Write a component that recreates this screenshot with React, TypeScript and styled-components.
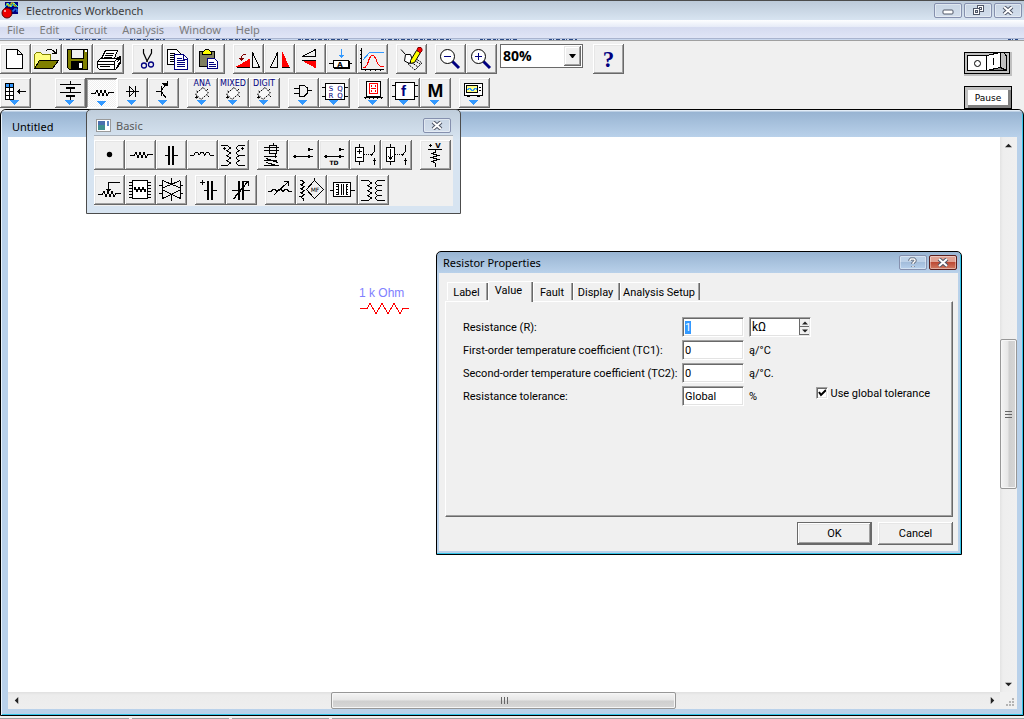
import React from 'react';
import styled, { createGlobalStyle, css } from 'styled-components';

const uiFont = '"Noto Sans", "Open Sans", sans-serif';
const dialogFont = 'Roboto, "Liberation Sans", Arial, sans-serif';
const navy = '#000080';
const face = '#f0f0f0';

const GlobalStyle = createGlobalStyle`
  * { box-sizing: border-box; }
  body { margin: 0; background: ${face}; font-family: ${uiFont}; font-size: 11px; color: #000; }
  button, input, select { font: inherit; color: inherit; margin: 0; padding: 0; border-radius: 0; }
`;

/* ---------- frame ---------- */

const Shell = styled.div`
  display: flex;
  flex-direction: column;
  height: 100vh;
  overflow: hidden;
  background: ${face};
`;

const TitleBar = styled.header`
  display: flex;
  align-items: center;
  height: 20px;
  padding: 0 2px 0 0;
  gap: 7px;
  border-top: 1px solid #4c4c4c;
  background: linear-gradient(#bccad9, #d8e4f1);
`;

const TitleText = styled.h1`
  flex: 1;
  margin: 0;
  font-size: 11px;
  line-height: 18px;
  font-weight: 400;
  color: #3c3c3c;
`;

const WindowButtons = styled.div`
  display: flex;
  gap: 2px;
`;

const CaptionButton = styled.button<{ $tone?: 'plain' | 'blue' | 'red' }>`
  display: flex;
  align-items: center;
  justify-content: center;
  width: 28px;
  height: 15px;
  border: 1px solid ${(p) => (p.$tone === 'red' ? '#5b1e1c' : '#8590ae')};
  border-radius: 2px;
  box-shadow: inset 0 0 0 1px rgba(255, 255, 255, 0.4);
  background: ${(p) =>
    p.$tone === 'red'
      ? 'linear-gradient(#e0a193 0 45%, #bd4a35 50%, #d07a62)'
      : p.$tone === 'blue'
        ? 'linear-gradient(#bdd1e8 0 45%, #a3bddb 50%, #b7d0ec)'
        : 'linear-gradient(#c8d5e4, #d3deec)'};
`;

const MenuBar = styled.nav`
  display: flex;
  align-items: center;
  gap: 1px;
  height: 18px;
  padding-top: 2px;
  background: linear-gradient(#fdfeff 0, #e6ebf7 38%, #d5dbf0 42%, #e0e5f6);
`;

const MenuLink = styled.a`
  padding: 0 7px;
  line-height: 16px;
  color: #7c7c7c;
  text-decoration: none;
`;

const BandEdge = styled.svg`
  display: block;
  flex: none;
  width: 100%;
  height: 3px;
`;

/* ---------- tool bars ---------- */

const ToolArea = styled.div`
  display: flex;
  justify-content: space-between;
  height: 68px;
  padding: 3px 12px 0 0;
`;

const ToolRows = styled.div`
  display: flex;
  flex-direction: column;
  gap: 4px;
`;

const ToolRow = styled.div`
  display: flex;
  gap: 8px;
`;

const ToolGroup = styled.div<{ $before?: number }>`
  display: flex;
  margin-left: ${(p) => p.$before ?? 0}px;
`;

const Tool = styled.button<{ $pressed?: boolean }>`
  width: 31px;
  height: 30px;
  border: 0;
  background: ${face};
  box-shadow: inset -1px -1px #696969, inset 1px 1px #fff, inset -2px -2px #a0a0a0, inset 2px 2px #e6e6e6;
  ${(p) =>
    p.$pressed &&
    css`
      background: repeating-conic-gradient(#fff 0 25%, #f0f0f0 0 50%) 0 0 / 2px 2px;
      box-shadow: inset 1px 1px #696969, inset -1px -1px #fff, inset 2px 2px #a0a0a0;
    `}
  svg { display: block; }
`;

const ZoomBox = styled.label`
  position: relative;
  display: block;
  width: 83px;
  height: 24px;
  margin-left: -5px;
  border: 1px solid #696969;
  background: #fff;
`;

const ZoomSelect = styled.select`
  width: 100%;
  height: 100%;
  padding: 0 0 2px 2px;
  border: 0;
  appearance: none;
  background: transparent;
  font: bold 14px "Open Sans", sans-serif;
`;

const DropArrow = styled.span`
  position: absolute;
  top: 1px;
  right: 1px;
  width: 17px;
  height: 20px;
  display: flex;
  align-items: center;
  justify-content: center;
  pointer-events: none;
  background: ${face};
  box-shadow: inset -1px -1px #696969, inset 1px 1px #e6e6e6, inset -2px -2px #a0a0a0, inset 2px 2px #fff;
`;

const Power = styled.div`
  display: flex;
  flex-direction: column;
  gap: 10px;
  padding-top: 8px;
`;

const PowerSwitch = styled.button`
  width: 48px;
  height: 24px;
  border: 0;
  background: #c0c0c0;
  svg { display: block; }
`;

const PauseButton = styled.button`
  width: 48px;
  height: 23px;
  border: 1px solid #000;
  background: #fff;
  box-shadow: inset 3px 3px #c0c0c0, inset -3px -3px #808080;
  font-size: 9px;
  font-family: "DejaVu Sans", sans-serif;
  line-height: 20px;
`;

/* ---------- circuit window ---------- */

const Desktop = styled.main`
  position: relative;
  display: flex;
  flex: 1;
  min-height: 0;
`;

const CircuitFrame = styled.section`
  display: flex;
  flex-direction: column;
  flex: 1;
  border: 1px solid #000;
  border-radius: 6px 6px 0 0;
  box-shadow: inset 1px 0 #e9f3fb, inset -1px -1px #33c4e8;
  background: #b9d1ea;
  padding: 0 6px 6px 7px;
  overflow: hidden;
`;

const CircuitTitle = styled.h2`
  margin: 0 -5px 0 -6px;
  padding: 5px 10px 0;
  height: 27px;
  font-size: 11px;
  line-height: 24px;
  font-weight: 400;
  background: linear-gradient(#e3edf7 0 1px, #98b4d2 2px, #b9d1ea);
`;

const Client = styled.div`
  display: grid;
  flex: 1;
  min-height: 0;
  grid-template-columns: 1fr 17px;
  grid-template-rows: 1fr 17px;
`;

const Sheet = styled.div`
  position: relative;
  background: #fff;
`;

const Part = styled.figure`
  position: absolute;
  left: 351px;
  top: 147px;
  margin: 0;
  font: 12px "Liberation Sans", Arial, sans-serif;
  line-height: 18px;
  color: #8080ff;
  svg { display: block; }
`;

const Bar = styled.div<{ $vertical?: boolean }>`
  display: flex;
  flex-direction: ${(p) => (p.$vertical ? 'column' : 'row')};
  background: ${(p) =>
    p.$vertical ? 'linear-gradient(90deg, #e3e3e3, #eee 3px, #f0f0f0)' : 'linear-gradient(#e0e0e0, #ececec 3px, #eee)'};
`;

const BarArrow = styled.button`
  display: flex;
  align-items: center;
  justify-content: center;
  width: 16px;
  height: 16px;
  border: 0;
  background: transparent;
`;

const Track = styled.div<{ $grow: number }>`
  flex: ${(p) => p.$grow} 1 0;
`;

const Thumb = styled.button<{ $grow: number; $vertical?: boolean }>`
  display: flex;
  align-items: center;
  justify-content: center;
  flex: ${(p) => p.$grow} 1 0;
  border: 1px solid #979797;
  border-radius: 2px;
  box-shadow: inset 0 0 0 1px #f6f6f6;
  background: linear-gradient(${(p) => (p.$vertical ? '90deg' : '180deg')}, #f4f4f4, #e6e6e6 48%, #cfcfcf 52%, #d6d6d6);
`;

const Corner = styled.div`
  display: flex;
  align-items: flex-end;
  justify-content: flex-end;
  padding: 2px;
  background: ${face};
`;

const StatusBar = styled.footer`
  display: flex;
  gap: 3px;
  height: 3px;
  padding-top: 2px;
`;

const StatusCell = styled.span<{ $wide?: boolean; $fill?: boolean }>`
  flex: ${(p) => (p.$fill ? '1' : 'none')};
  width: ${(p) => (p.$wide ? 129 : 97)}px;
  background: #a0a0a0;
`;

/* ---------- parts palette ---------- */

const Palette = styled.section`
  position: absolute;
  left: 86px;
  top: 0;
  width: 375px;
  padding: 0 7px 7px;
  border: 1px solid #4c4c4c;
  border-radius: 5px 5px 0 0;
  background: linear-gradient(#bfcddb, #d7e4f1 30px);
`;

const PaletteTitle = styled.header`
  display: flex;
  align-items: center;
  gap: 5px;
  height: 26px;
  padding: 6px 2px 0;
  border-bottom: 1px solid #a9b1ba;
  h2 { flex: 1; margin: 0; font-size: 11px; font-weight: 400; line-height: 20px; color: #5a5a5a; }
`;

const PaletteBody = styled.div`
  display: flex;
  flex-direction: column;
  gap: 5px;
  padding: 4px 0 1px;
  background: ${face};
`;

/* ---------- properties dialog ---------- */

const Dialog = styled.section`
  position: absolute;
  left: 436px;
  top: 142px;
  width: 526px;
  padding: 0 3px 3px 2px;
  border: 1px solid #000;
  border-radius: 5px 5px 0 0;
  background: linear-gradient(#98b4d2, #b9d1ea 21px);
  box-shadow: inset -1px -1px #33c4e8;
`;

const DialogTitle = styled.header`
  display: flex;
  align-items: center;
  gap: 2px;
  height: 21px;
  padding: 0 1px 0 4px;
  h2 { flex: 1; margin: 0; font-size: 11px; font-weight: 400; line-height: 20px; }
`;

const DialogBody = styled.form`
  padding: 7px 5px 6px 6px;
  background: ${face};
  font: 11px ${dialogFont};
`;

const Tabs = styled.div`
  display: flex;
  align-items: flex-end;
  height: 21px;
  padding-left: 2px;
`;

const Tab = styled.button<{ $active?: boolean; $width: number }>`
  position: relative;
  width: ${(p) => p.$width}px;
  height: ${(p) => (p.$active ? 21 : 18)}px;
  margin-bottom: ${(p) => (p.$active ? -1 : 1)}px;
  padding: ${(p) => (p.$active ? '0 4px 3px 0' : '2px 2px 0 0')};
  border: 0;
  background: ${face};
  text-align: center;
  white-space: nowrap;
  box-shadow: inset 1px 1px #fff, inset -1px 0 #696969, inset -2px 0 #a0a0a0;
`;

const Panel = styled.div`
  display: flex;
  justify-content: space-between;
  height: 216px;
  padding: 15px 22px 0 17px;
  border: 1px solid;
  border-color: #fff #696969 #696969 #fff;
  box-shadow: inset -1px -1px #a0a0a0;
`;

const Fields = styled.div`
  display: grid;
  grid-template-columns: 219px 62px 68px;
  grid-auto-rows: 20px;
  row-gap: 3px;
  height: max-content;
  align-items: center;
`;

const sunken = css`
  border: 1px solid;
  border-color: #a0a0a0 #fff #fff #a0a0a0;
  box-shadow: inset 1px 1px #696969, inset -1px -1px #e3e3e3;
  background: #fff;
`;

const Field = styled.input`
  width: 62px;
  height: 20px;
  padding: 0 2px;
  ${sunken}
  &:focus { outline: none; }
  &::selection { background: #39f; color: #fff; }
`;

const UnitBox = styled.div`
  display: flex;
  width: 62px;
  height: 20px;
  margin-left: 5px;
  padding: 1px;
  ${sunken}
`;

const UnitInput = styled.input`
  flex: 1;
  min-width: 0;
  padding: 0 1px;
  border: 0;
  background: transparent;
  font-size: 12px;
`;

const Spinner = styled.div`
  display: flex;
  flex-direction: column;
  width: 10px;
`;

const SpinButton = styled.button`
  display: flex;
  align-items: center;
  justify-content: center;
  flex: 1;
  min-height: 0;
  border: 1px solid #696969;
  border-width: 0 0 1px 1px;
  background: ${face};
`;

const Unit = styled.span`
  padding-left: 5px;
`;

const Check = styled.label`
  display: flex;
  align-items: center;
  gap: 3px;
  height: 14px;
  margin-top: 69px;
  white-space: nowrap;
  input {
    appearance: none;
    width: 12px;
    height: 12px;
    ${sunken}
  }
  input:checked {
    background: #fff
      url("data:image/svg+xml,%3Csvg xmlns='http://www.w3.org/2000/svg' viewBox='0 0 10 10'%3E%3Cpath d='M2 4L4 7L9 2' fill='none' stroke='black' stroke-width='2'/%3E%3C/svg%3E");
  }
`;

const Actions = styled.div`
  display: flex;
  justify-content: flex-end;
  gap: 6px;
  padding-top: 5px;
`;

const Push = styled.button<{ $default?: boolean }>`
  width: 75px;
  height: 23px;
  border: ${(p) => (p.$default ? '1px solid #696969' : '0')};
  background: ${face};
  box-shadow: inset -1px -1px #696969, inset 1px 1px #fff, inset -2px -2px #a0a0a0, inset 2px 2px #e6e6e6;
`;

/* ---------- icon drawings ---------- */

const Blue = <path d="M10 22h9v1h-1v1h-1v1h-1v1h-1v1h-1v-1h-1v-1h-1v-1h-1v-1h-1z" fill="#39f" stroke="none" />;
const T = (p: { x: number; y: number; s?: number; children: string; fill?: string; bold?: boolean; w?: string }) => (
  <text
    x={p.x}
    y={p.y}
    fontSize={p.s ?? 8}
    fill={p.fill ?? navy}
    stroke="none"
    textAnchor="middle"
    fontWeight={p.bold ? 700 : 400}
    fontFamily={p.w ?? 'DejaVu Sans, sans-serif'}
  >
    {p.children}
  </text>
);

const chip = (
  <g shapeRendering="auto">
    <path d="M16 9.5L21.5 15L14 21.5L8.5 16Z" fill="#f8f8f8" strokeDasharray="2 1" />
    <path d="M9.5 17.5V20.5M8 19.5H11M19.5 12.5L21 11M20.5 17.5L22 19M9.5 13L11 14" />
  </g>
);
const zig = 'l1 -3h1l1 5h1l1 -5h1l1 5h1l1 -5h1l1 5h1l1 -3';

const icons: Record<string, React.ReactNode> = {
  new: <path d="M6.5 5.5H17.5L22.5 10.5V24.5H6.5ZM17.5 5.5V10.5H22.5" fill="#fff" />,
  open: (
    <>
      <path d="M3.5 24V10.5L5.5 8.5H9.5L11.5 10.5H19.5V16H9L3.5 24" fill="#ffff80" stroke="#808000" />
      <path d="M3.5 24.5L8.5 16.5H27.5L21.5 24.5Z" fill="#808000" />
      <path d="M14.5 7.5L16.5 5.5H20.5L24.5 8.5M25.5 5v5M21 9.5h5M23 8.5h3" />
    </>
  ),
  save: (
    <>
      <path d="M5.5 5.5H25.5V25.5H7.5L5.5 23.5Z" fill="#808000" />
      <path d="M9.5 5.5H21.5V14.5H9.5Z" fill="#f0f0f0" />
      <path d="M9 17h12v8h-12z" fill="#000" stroke="none" />
      <path d="M17 19h3v5h-3zM23 6h2v2h-2z" fill="#fff" stroke="none" />
    </>
  ),
  print: (
    <>
      <path d="M7.5 16.5L12.5 6.5H24.5L20.5 16.5" fill="#fff" />
      <path d="M13 9.5h8M12 11.5h8M11 13.5h8" />
      <path d="M4.5 17.5L7.5 14.5H23.5L27.5 12.5V19.5L22.5 25.5H6.5L4.5 23.5Z" fill="#fff" />
      <path d="M4.5 17.5H21.5L27 13M21.5 17.5V25M5 20.5H21M23.5 18.5L27 14.5M23.5 22.5L27 18.5M7 22.5h10" />
    </>
  ),
  cut: (
    <>
      <path d="M11.5 5V9L15.5 18M19.5 5V9L14.5 18" strokeWidth="1.2" />
      <circle cx="12" cy="21.5" r="2.5" stroke={navy} strokeWidth="1.3" />
      <circle cx="19" cy="20.5" r="2.5" stroke={navy} strokeWidth="1.3" />
    </>
  ),
  copy: (
    <>
      <path d="M4.5 5.5H13.5L17.5 9.5V20.5H4.5Z" fill="#fff" />
      <path d="M7 9.5h5M7 11.5h5M7 13.5h5M7 15.5h5M7 17.5h5" />
      <path d="M11.5 10.5H20.5L24.5 14.5V25.5H11.5Z" fill="#fff" stroke={navy} />
      <path d="M14 14.5h5M14 16.5h8M14 18.5h8M14 20.5h8M14 22.5h8M20.5 11v4h4" stroke={navy} />
    </>
  ),
  paste: (
    <>
      <path d="M5.5 7.5H20.5V22.5H5.5Z" fill="#808060" />
      <path d="M8.5 10.5V8.5L11.5 5.5H14.5L17.5 8.5V10.5Z" fill="#ff0" />
      <path d="M13.5 14.5H20.5L23.5 17.5V24.5H13.5Z" fill="#fff" stroke={navy} />
      <path d="M15 18.5h5M15 20.5h7M15 22.5h7" stroke={navy} />
    </>
  ),
  rotate: (
    <>
      <path d="M4.5 22.5L16.5 15.5V22.5Z" fill="#f00" stroke="#f00" />
      <path d="M4 23.5H17M19.5 8.5L26.5 23.5H19.5Z" />
      <path d="M12.5 10.5H10.5L8.5 12.5V17M6 14.5h5M7 15.5h3" stroke="#800000" />
    </>
  ),
  fliph: (
    <>
      <path d="M13.5 8.5V23.5H6.5Z" />
      <path d="M18.5 8.5V22.5L24.5 22.5Z" fill="#f00" stroke="#f00" />
      <path d="M18 23.5h8" />
    </>
  ),
  flipv: (
    <>
      <path d="M20.5 5.5V12.5H7.5Z" />
      <path d="M20.5 23.5V17.5H9.5Z" fill="#f00" stroke="#f00" />
      <path d="M7 16.5h14" />
    </>
  ),
  label: (
    <>
      <path d="M15.5 5V14M13 11.5h5M14 12.5h3" stroke="#39f" />
      <path d="M7.5 16.5H22.5V23.5H7.5ZM3 19.5h4M23 19.5h3" fill="#fff" />
      <path d="M8 24.5h16M23.5 17v7" />
      <T x={14} y={23} s={7} bold fill="#000">A</T>
    </>
  ),
  graph: (
    <>
      <path d="M4.5 4V26M4 25.5H27M3 6.5h2M3 10.5h2M3 14.5h2M3 18.5h2M8.5 25v2M13.5 25v2M18.5 25v2M23.5 25v2" />
      <path d="M5.5 16.5L12.5 8.5H27" stroke="#39f" />
      <path d="M5.5 23.5H8L10.5 20L12.5 14L14.5 11.5H16.5L18.5 14L21 20L23.5 22.5H27" stroke="#f00" />
    </>
  ),
  wizard: (
    <>
      <path d="M5 5.5L9 10M9.5 10.5H14.5L16.5 16L13.5 19.5L8.5 17Z" fill="#fff" />
      <path d="M12 20L19 14L26 19L19 26ZM15 18l7 5M18 16l6 4" strokeDasharray="2 1" />
      <path d="M14.5 19.5V16.5L20.5 6.5L24.5 8.5L18.5 18.5Z" fill="#ff0" />
      <path d="M21 6L22 3.5H25L26 5V7L24 9Z" fill="#f00" stroke="#800000" />
    </>
  ),
  zoomout: (
    <>
      <path d="M17 17L24 24" stroke={navy} strokeWidth="3" />
      <circle cx="12.5" cy="12.5" r="7" fill="#fff" />
      <path d="M9 12.5h7" stroke={navy} />
    </>
  ),
  zoomin: (
    <>
      <path d="M17 17L24 24" stroke={navy} strokeWidth="3" />
      <circle cx="12.5" cy="12.5" r="7" fill="#fff" />
      <path d="M9 12.5h7M12.5 9v7" stroke={navy} />
    </>
  ),
  help: <T x={15.5} y={23} s={23} bold w="Liberation Serif, serif">?</T>,

  parts: (
    <>
      <path d="M5.5 5.5H13.5V21.5H5.5ZM9.5 5V21M5 9.5h9M5 13.5h9M5 17.5h9" fill="#fff" />
      <path d="M6 6h3v3h-3zM10 6h3v3h-3z" fill="#39f" stroke="none" />
      <path d="M17 13.5H26M19.5 11v5M18.5 12v3" />
      {Blue}
    </>
  ),
  battery: (
    <>
      <path d="M15.5 3V6M5 6.5H26M5 14.5H26M15.5 18v4M15.5 10v5" />
      <path d="M11 10h9M11 18h9" strokeWidth="2" />
      {Blue}
    </>
  ),
  resistor2: (
    <>
      <path d={'M5 15.5H9.5' + zig + 'h5'} />
      <g transform="translate(1 1)">{Blue}</g>
    </>
  ),
  diode: (
    <>
      <path d="M9 13.5H22M12.5 8.5V18.5L17.5 13.5ZM18.5 8V19" />
      {Blue}
    </>
  ),
  transistor: (
    <>
      <path d="M8 13.5H13M13.5 8V18M13.5 12L19 5M13.5 14L18 20M14 5.5h5M19.5 3v5M15 6.5h4M16 7.5h3" />
      {Blue}
    </>
  ),
  ana: <>{chip}<T x={15} y={8}>ANA</T>{Blue}</>,
  mixed: <>{chip}<T x={15} y={8}>MIXED</T>{Blue}</>,
  digit: <>{chip}<T x={15} y={8}>DIGIT</T>{Blue}</>,
  gate: (
    <>
      <path d="M6 10.5H11M6 15.5H11M11.5 7.5H16L19.5 10V15L16 18.5H11.5ZM20 12.5H24" />
      {Blue}
    </>
  ),
  flop: (
    <>
      <path d="M6.5 5.5H25.5V21.5H6.5ZM3 9.5h3M3 18.5h3M26 9.5h3M26 18.5h3" fill="#fff" />
      <T x={12} y={13} s={7}>S</T>
      <T x={21} y={13} s={7}>Q</T>
      <T x={12} y={20} s={7}>R</T>
      <T x={21} y={20} s={7}>Q</T>
      {Blue}
    </>
  ),
  seven: (
    <>
      <path d="M8.5 3.5H22.5V18.5H8.5Z" fill="#fff" />
      <path d="M11.5 5.5H19.5V15.5H11.5ZM13 10.5H18M13.5 7v2M17.5 7v2M13.5 12v2M17.5 12v2" stroke="#f00" fill="none" />
      <path d="M6 19.5H25M7.5 19v2M11.5 19v2M15.5 19v2M19.5 19v2M23.5 19v2" />
      {Blue}
    </>
  ),
  func: (
    <>
      <path d="M6.5 4.5H25.5V21.5H6.5ZM3 7.5h3M3 18.5h3M26 7.5h3M26 18.5h3" fill="#fff" />
      <T x={14.5} y={18} s={15} bold w="Liberation Sans, sans-serif">f</T>
      {Blue}
    </>
  ),
  misc: <><T x={15.5} y={19} s={19} bold fill="#000" w="Liberation Sans, sans-serif">M</T>{Blue}</>,
  scope: (
    <>
      <path d="M5.5 5.5H23.5V17.5H5.5Z" fill="#fff" />
      <path d="M7.5 7.5H18.5V14.5H7.5Z" fill="#ff8" />
      <path d="M8 11.5h1v-1h2v1h1v1h2v-1h1v-1h2v1h1" stroke="#39f" fill="none" />
      <path d="M20 9h2v1h-2zM20 12h2v1h-2zM8 18h3v1h-3zM18 18h3v1h-3z" fill="#000" stroke="none" />
      {Blue}
    </>
  ),

  dot: <circle cx="15.5" cy="14.5" r="2.7" fill="#000" stroke="none" />,
  resistor: <path d={'M5 15.5H9.5' + zig + 'h5'} />,
  cap: (
    <>
      <path d="M9 15.5h4M18 15.5h4" />
      <path d="M13 6V25M17 6V25" strokeWidth="2" />
    </>
  ),
  inductor: <path d="M3 15.5H6.5L8.5 12.5H10.5L12 15L14 12.5H16L17.5 15L19.5 12.5H21.5L23.5 15.5H27" />,
  xfmrdot: (
    <>
      <path d="M3 5.5H9l3 2v1l-3 2h-1l4 2v1l-3 2h-1l4 2v1l-3 2h-1l4 2v1l-3 2H3" />
      <path d="M27 5.5H21l-3 2v1l3 2h1l-4 2v1l3 2h6M22 15.5l-4 2v1l3 2h1l-4 2v1l3 2H27M5 8.5h3M6.5 7v3M23 8.5h3M24.5 7v3" />
    </>
  ),
  relay: (
    <>
      <path d="M12.5 5.5H19.5V13.5H12.5ZM16 3v3M7 7.5H22M7 10.5H22M7 16.5H20M7 20.5H20M7 25.5H22M9 18.5l12 4M9 22.5l11 3M18.5 14v4" />
    </>
  ),
  sw: (
    <>
      <path d="M5 16.5H25M20 9.5H25" />
      <path d="M6 15h2v3h-2zM20 15h2v3h-2zM20 8h2v3h-2z" fill="#000" stroke="none" />
    </>
  ),
  swtd: (
    <>
      <path d="M5 16.5H25M20 9.5H25" />
      <path d="M6 15h2v3h-2zM20 15h2v3h-2zM20 8h2v3h-2z" fill="#000" stroke="none" />
      <T x={15} y={25} s={6} bold fill="#000">TD</T>
    </>
  ),
  vsw: (
    <>
      <path d="M5.5 7.5H13.5V21.5H5.5ZM9.5 4v3M9.5 22v3M7 11.5h5M9.5 9v5M7 17.5h5" fill="#fff" />
      <path d="M14 14.5H21" strokeDasharray="1 1" />
      <path d="M24.5 5V11L21 16M24.5 18v4M23 20.5h3M24.5 22v3" />
    </>
  ),
  isw: (
    <>
      <path d="M5.5 7.5H13.5V21.5H5.5ZM9.5 4v3M9.5 22v3M9.5 9v10M7.5 16.5L9.5 19.5L11.5 16.5" fill="#fff" />
      <path d="M14 14.5H21" strokeDasharray="1 1" />
      <path d="M24.5 5V11L21 16M24.5 18v4M23 20.5h3M24.5 22v3" />
    </>
  ),
  pullup: (
    <>
      <path d="M8 9.5H22M15.5 9V12L12 13.5L18 15.5L12 17.5L18 19.5L12 21.5L15.5 23.5V27M9 5.5h3M10.5 4v3" />
      <T x={18} y={8} s={7} bold fill="#000">V</T>
    </>
  ),
  pot: <path d={'M4 19.5H8.5' + zig + 'h5M26 7.5H14.5V17M12 14.5h5M13 15.5h3'} />,
  pack: (
    <>
      <path d="M7.5 5.5H22.5V23.5H7.5Z" fill="#fff" />
      <path d="M4 7.5h3M4 10.5h3M4 13.5h3M4 16.5h3M4 19.5h3M4 22.5h3M23 7.5h3M23 10.5h3M23 13.5h3M23 16.5h3M23 19.5h3M23 22.5h3" />
      <path d="M9 14.5l1 -2l2 4l2 -4l2 4l2 -4l2 4l1 -2" />
    </>
  ),
  analogsw: (
    <path d="M3 10.5H6M3 18.5H6M24 10.5h3M24 18.5h3M6.5 5.5L24.5 13V15L6.5 23.5ZM24.5 5.5L6.5 13M24.5 23.5L6.5 15M24.5 5.5V23.5M15.5 3v6M15.5 20v6" />
  ),
  capplus: (
    <>
      <path d="M9 15.5h4M18 15.5h4M5 7.5h5M7.5 5v5" />
      <path d="M13 6V25M17 6V25" strokeWidth="2" />
    </>
  ),
  varcap: (
    <>
      <path d="M6 15.5h6M18 15.5h6M7.5 24L21.5 7M18 6.5h5M22.5 6v5" strokeWidth="1.4" />
      <path d="M13 6V25M17 6V25" strokeWidth="2" />
    </>
  ),
  varind: <path d="M3 16.5H6L8 14.5H10L12 16.5L14 14.5H16L18 16.5L20 14.5H22L24 16.5H27M9 20L23 7M19 6.5h5M23.5 6v5" />,
  mf: (
    <>
      <path d="M4 5.5h2l2 2l-2 2h-2l4 2l-2 2h-2l4 2l-2 2h-2l4 2l-2 2h-2l3 2v2M18.5 5.5L27.5 14.5L18.5 23.5L10.5 14.5ZM18.5 3v3" />
      <T x={19} y={17} s={6} fill="#000">MF</T>
    </>
  ),
  nlxfmr: (
    <>
      <path d="M6.5 7.5H23.5V21.5H6.5Z" fill="#fff" />
      <path d="M3 15.5h3M24 15.5h4M9 9.5h2v2h-2h2v3h-2h2v3h-2h2v2h-2M21 9.5h-2v2h2h-2v3h2h-2v3h2h-2v2h2M14.5 9v11M16.5 9v11" />
    </>
  ),
  xfmr: (
    <>
      <path d="M3 5.5H10l3 2v1l-3 2h-1l4 2v1l-3 2h-1l4 2v1l-3 2h-1l4 2v1l-3 2H3" />
      <path d="M27 5.5H20l-3 2v1l3 2h4M20 10.5l-3 2v1l3 2h4M20 15.5l-3 2v1l3 2h4M20 20.5l-3 2v1l3 2H27" />
    </>
  ),
};

const roundIcons = new Set(['cut', 'zoomin', 'zoomout', 'dot', 'wizard']);

function ToolButton({ name, title, pressed }: { name: string; title: string; pressed?: boolean }) {
  return (
    <Tool type="button" aria-label={title} aria-pressed={pressed} $pressed={pressed}>
      <svg
        width="31"
        height="30"
        viewBox="0 0 31 30"
        fill="none"
        stroke="#000"
        shapeRendering={roundIcons.has(name) ? 'auto' : 'crispEdges'}
      >
        {icons[name]}
      </svg>
    </Tool>
  );
}

function Group({ items, before, pressed }: { items: [string, string][]; before?: number; pressed?: string }) {
  return (
    <ToolGroup $before={before}>
      {items.map(([name, title]) => (
        <ToolButton key={name} name={name} title={title} pressed={name === pressed || undefined} />
      ))}
    </ToolGroup>
  );
}

const CloseGlyph = () => (
  <svg width="12" height="9" viewBox="0 0 12 9">
    <path d="M2 1L10 8M10 1L2 8" stroke="#4f5666" strokeWidth="4" />
    <path d="M2 1L10 8M10 1L2 8" stroke="#fff" strokeWidth="2" />
  </svg>
);

const Triangle = ({ d, size = 7 }: { d: string; size?: number }) => (
  <svg width={size} height={size} viewBox="0 0 8 8">
    <path d={d} fill="#222" />
  </svg>
);

const UP = 'M0 6L4 2L8 6Z';
const DOWN = 'M0 2L4 6L8 2Z';
const LEFT = 'M6 0L2 4L6 8Z';
const RIGHT = 'M2 0L6 4L2 8Z';

const fragments = [[59, 101], [130, 165], [196, 271], [298, 350], [381, 451], [480, 517], [549, 577], [1008, 1018]];
const menus = ['File', 'Edit', 'Circuit', 'Analysis', 'Window', 'Help'];

export default function App() {
  const resistance = React.useRef<HTMLInputElement>(null);
  React.useEffect(() => {
    resistance.current?.focus();
    resistance.current?.select();
  }, []);

  return (
    <Shell>
      <GlobalStyle />
      <TitleBar>
        <svg width="19" height="18" viewBox="0 0 19 18">
          <path d="M5 0H18V12H5Z" fill="#000080" />
          <path d="M5 5L8 1L11 5L14 1L18 5" stroke="#0ff" fill="none" />
          <path d="M6 2h2v2h3v-3h3v3h3" stroke="#ff0" fill="none" />
          <path d="M11 9h3v-2h3v3" stroke="#39f" fill="none" />
          <circle cx="7" cy="11" r="5" fill="#e00" stroke="#500" />
          <circle cx="5" cy="9" r="1" fill="#fcc" />
        </svg>
        <TitleText>Electronics Workbench</TitleText>
        <WindowButtons>
          <CaptionButton type="button" aria-label="Minimize">
            <svg width="12" height="9" viewBox="0 0 12 9">
              <rect x="1" y="4" width="10" height="4" rx="1" fill="#fff" stroke="#4f5666" />
            </svg>
          </CaptionButton>
          <CaptionButton type="button" aria-label="Restore">
            <svg width="13" height="11" viewBox="0 0 13 11" shapeRendering="crispEdges">
              <path d="M5.5 0.5H11.5V6.5H5.5ZM7.5 2.5H9.5V4.5H7.5Z" fill="#fff" stroke="#4f5666" />
              <path d="M1.5 3.5H7.5V9.5H1.5Z" fill="#fff" stroke="#4f5666" />
              <path d="M3.5 5.5H5.5V7.5H3.5Z" fill="#c8d5e4" stroke="#4f5666" />
            </svg>
          </CaptionButton>
          <CaptionButton type="button" aria-label="Close"><CloseGlyph /></CaptionButton>
        </WindowButtons>
      </TitleBar>
      <MenuBar>
        {menus.map((m) => <MenuLink key={m} href="#">{m}</MenuLink>)}
      </MenuBar>
      <BandEdge shapeRendering="crispEdges">
        <rect width="100%" height="1" fill="#a9b4cf" />
        <rect y="1" width="100%" height="1" fill="#c9d8f0" />
        <rect y="2" width="100%" height="1" fill="#a0a0a0" />
        {fragments.map(([a, b]) => (
          <path key={a} d={`M${a} 1.5H${b}`} stroke="#2b4a86" strokeDasharray="3 1 1 2 4 2" />
        ))}
      </BandEdge>

      <ToolArea>
        <ToolRows>
          <ToolRow>
            <Group items={[['new', 'New'], ['open', 'Open'], ['save', 'Save'], ['print', 'Print']]} />
            <Group items={[['cut', 'Cut'], ['copy', 'Copy'], ['paste', 'Paste']]} />
            <Group
              items={[['rotate', 'Rotate'], ['fliph', 'Flip horizontal'], ['flipv', 'Flip vertical'], ['label', 'Component properties'], ['graph', 'Analysis graphs']]}
            />
            <Group items={[['wizard', 'Create subcircuit']]} />
            <Group items={[['zoomout', 'Zoom out'], ['zoomin', 'Zoom in']]} />
            <ZoomBox>
              <ZoomSelect aria-label="Zoom" defaultValue="80%">
                <option>80%</option>
                <option>100%</option>
              </ZoomSelect>
              <DropArrow>
                <svg width="7" height="4" viewBox="0 0 7 4"><path d="M0 0H7L4 4H3Z" /></svg>
              </DropArrow>
            </ZoomBox>
            <Group before={2} items={[['help', 'Help']]} />
          </ToolRow>
          <ToolRow>
            <Group items={[['parts', 'Favorites']]} />
            <Group
              before={16}
              pressed="resistor2"
              items={[['battery', 'Sources'], ['resistor2', 'Basic'], ['diode', 'Diodes'], ['transistor', 'Transistors']]}
            />
            <Group items={[['ana', 'Analog ICs'], ['mixed', 'Mixed ICs'], ['digit', 'Digital ICs']]} />
            <Group items={[['gate', 'Logic gates'], ['flop', 'Digital']]} />
            <Group items={[['seven', 'Indicators'], ['func', 'Controls'], ['misc', 'Miscellaneous']]} />
            <Group items={[['scope', 'Instruments']]} />
          </ToolRow>
        </ToolRows>
        <Power>
          <PowerSwitch type="button" aria-label="Activate simulation">
            <svg width="48" height="24" viewBox="0 0 48 24" shapeRendering="crispEdges" fill="none" stroke="#000">
              <rect x="0.5" y="0.5" width="45" height="21" fill="#c0c0c0" />
              <rect x="3.5" y="3.5" width="39" height="15" fill="#fff" />
              <path d="M22.5 3.5L36.5 0.5V15.5L22.5 18.5Z" fill="#fff" />
              <path d="M36.5 0.5H39.5L42.5 4V18.5L36.5 15.5Z" fill="#c0c0c0" />
              <path d="M23 18.5L36.5 15.5L42 18.5Z" fill="#808080" />
              <path d="M29.5 6V13" />
              <circle cx="13.5" cy="11.5" r="3" shapeRendering="auto" />
            </svg>
          </PowerSwitch>
          <PauseButton type="button">Pause</PauseButton>
        </Power>
      </ToolArea>

      <Desktop>
        <CircuitFrame>
          <CircuitTitle>Untitled</CircuitTitle>
          <Client>
            <Sheet>
              <Part>
                1 k Ohm
                <svg width="51" height="13" viewBox="0 0 51 13" shapeRendering="crispEdges" fill="none" stroke="#f00">
                  <path d="M1 6.5H8L11 1.5L17 11.5L23 1.5L29 11.5L35 1.5L41 11.5L44 6.5H50" />
                </svg>
              </Part>
            </Sheet>
            <Bar $vertical>
              <BarArrow type="button" aria-label="Scroll up"><Triangle d={UP} /></BarArrow>
              <Track $grow={187} />
              <Thumb type="button" aria-label="Vertical position" $grow={148} $vertical>
                <svg width="7" height="8" viewBox="0 0 7 8"><path d="M0 1.5H7M0 4.5H7M0 7.5H7" stroke="#666" /></svg>
              </Thumb>
              <Track $grow={188} />
              <BarArrow type="button" aria-label="Scroll down"><Triangle d={DOWN} /></BarArrow>
            </Bar>
            <Bar>
              <BarArrow type="button" aria-label="Scroll left"><Triangle d={LEFT} /></BarArrow>
              <Track $grow={308} />
              <Thumb type="button" aria-label="Horizontal position" $grow={343}>
                <svg width="8" height="7" viewBox="0 0 8 7"><path d="M1.5 0V7M4.5 0V7M7.5 0V7" stroke="#666" /></svg>
              </Thumb>
              <Track $grow={309} />
              <BarArrow type="button" aria-label="Scroll right"><Triangle d={RIGHT} /></BarArrow>
            </Bar>
            <Corner>
              <svg width="9" height="9" viewBox="0 0 9 9" fill="#b4b4b4">
                <path d="M6 0h2v2h-2zM6 3h2v2h-2zM3 3h2v2h-2zM0 6h2v2h-2zM3 6h2v2h-2zM6 6h2v2h-2z" />
              </svg>
            </Corner>
          </Client>
        </CircuitFrame>

        <Palette>
          <PaletteTitle>
            <svg width="15" height="13" viewBox="0 0 15 13">
              <rect x="0.5" y="0.5" width="14" height="12" fill="#fff" stroke="#9a9a9a" />
              <rect x="2" y="2" width="7" height="9" fill="#3f8f8f" />
              <rect x="2" y="2" width="7" height="4" fill="#4a6fae" />
              <rect x="11" y="2" width="2" height="5" fill="#5c86c6" />
            </svg>
            <h2>Basic</h2>
            <CaptionButton type="button" aria-label="Close palette"><CloseGlyph /></CaptionButton>
          </PaletteTitle>
          <PaletteBody>
            <ToolRow>
              <Group
                items={[['dot', 'Connector'], ['resistor', 'Resistor'], ['cap', 'Capacitor'], ['inductor', 'Inductor'], ['xfmrdot', 'Transformer']]}
              />
              <Group
                items={[['relay', 'Relay'], ['sw', 'Switch'], ['swtd', 'Time-delay switch'], ['vsw', 'Voltage-controlled switch'], ['isw', 'Current-controlled switch']]}
              />
              <Group items={[['pullup', 'Pull-up resistor']]} />
            </ToolRow>
            <ToolRow>
              <Group items={[['pot', 'Potentiometer'], ['pack', 'Resistor pack'], ['analogsw', 'Analog switch']]} />
              <Group items={[['capplus', 'Polarized capacitor'], ['varcap', 'Variable capacitor']]} />
              <Group
                items={[['varind', 'Variable inductor'], ['mf', 'Coreless coil'], ['nlxfmr', 'Magnetic core'], ['xfmr', 'Nonlinear transformer']]}
              />
            </ToolRow>
          </PaletteBody>
        </Palette>

        <Dialog role="dialog" aria-labelledby="dialog-title">
          <DialogTitle>
            <h2 id="dialog-title">Resistor Properties</h2>
            <CaptionButton type="button" aria-label="Help" $tone="blue">
              <svg width="10" height="12" viewBox="0 0 10 12" fill="none">
                <path d="M2 4V3L3 2H6L7 3V4L5 6V7M5 9V10" stroke="#4f5666" strokeWidth="3" />
                <path d="M2 4V3L3 2H6L7 3V4L5 6V7M5 9V10" stroke="#fff" strokeWidth="1.5" />
              </svg>
            </CaptionButton>
            <CaptionButton type="button" aria-label="Close dialog" $tone="red"><CloseGlyph /></CaptionButton>
          </DialogTitle>
          <DialogBody onSubmit={(e) => e.preventDefault()}>
            <Tabs role="tablist">
              <Tab type="button" role="tab" $width={41}>Label</Tab>
              <Tab type="button" role="tab" aria-selected $active $width={45}>Value</Tab>
              <Tab type="button" role="tab" $width={40}>Fault</Tab>
              <Tab type="button" role="tab" $width={47}>Display</Tab>
              <Tab type="button" role="tab" $width={80}>Analysis Setup</Tab>
            </Tabs>
            <Panel role="tabpanel">
              <Fields>
                <label htmlFor="r">Resistance (R):</label>
                <Field id="r" ref={resistance} defaultValue="1" />
                <UnitBox>
                  <UnitInput aria-label="Resistance unit" defaultValue="kΩ" />
                  <Spinner>
                    <SpinButton type="button" aria-label="Larger unit"><Triangle d={UP} size={6} /></SpinButton>
                    <SpinButton type="button" aria-label="Smaller unit"><Triangle d={DOWN} size={6} /></SpinButton>
                  </Spinner>
                </UnitBox>
                <label htmlFor="tc1">First-order temperature coefficient (TC1):</label>
                <Field id="tc1" defaultValue="0" />
                <Unit>ą/°C</Unit>
                <label htmlFor="tc2">Second-order temperature coefficient (TC2):</label>
                <Field id="tc2" defaultValue="0" />
                <Unit>ą/°C.</Unit>
                <label htmlFor="tol">Resistance tolerance:</label>
                <Field id="tol" defaultValue="Global" />
                <Unit>%</Unit>
              </Fields>
              <Check>
                <input type="checkbox" defaultChecked />
                Use global tolerance
              </Check>
            </Panel>
            <Actions>
              <Push type="submit" $default>OK</Push>
              <Push type="button">Cancel</Push>
            </Actions>
          </DialogBody>
        </Dialog>
      </Desktop>
      <StatusBar>
        <StatusCell $wide />
        <StatusCell />
        <StatusCell />
        <StatusCell $fill />
      </StatusBar>
    </Shell>
  );
}
